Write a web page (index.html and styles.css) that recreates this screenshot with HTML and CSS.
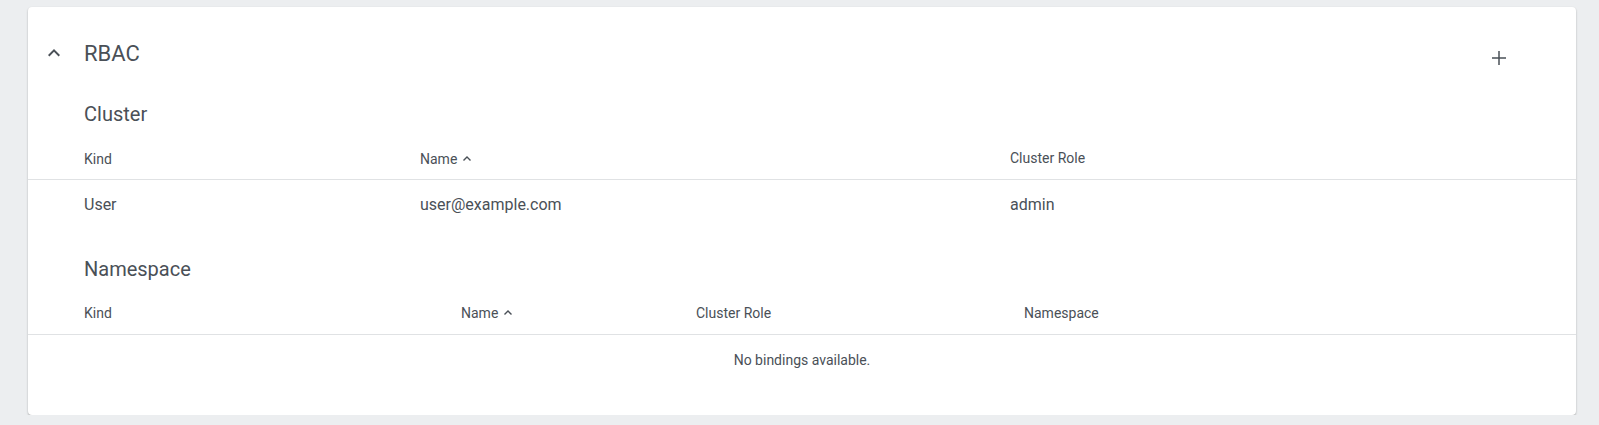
FILE: index.html
```html
<!DOCTYPE html>
<html lang="en">
<head>
<meta charset="utf-8">
<title>RBAC</title>
<link rel="stylesheet" href="styles.css">
</head>
<body>
<div class="card">
  <div class="card-header">
    <svg class="toggle" viewBox="0 0 24 24" width="24" height="24"><path d="M12 8l-6 6 1.41 1.41L12 10.83l4.59 4.58L18 14z"/></svg>
    <div class="card-title">RBAC</div>
    <svg class="add" viewBox="0 0 24 24" width="24" height="24"><path d="M19 12.75h-6.25V19h-1.5v-6.25H5v-1.5h6.25V5h1.5v6.25H19z"/></svg>
  </div>

  <div class="section-title">Cluster</div>
  <div class="row head cluster-cols">
    <div>Kind</div>
    <div class="sort">Name <svg viewBox="0 0 10 10" width="10" height="10"><polyline points="1.5,6.5 5,3 8.5,6.5"/></svg></div>
    <div class="up1">Cluster Role</div>
  </div>
  <div class="row data cluster-cols">
    <div>User</div>
    <div>user@example.com</div>
    <div>admin</div>
  </div>

  <div class="section-title ns">Namespace</div>
  <div class="row head ns-cols">
    <div>Kind</div>
    <div class="sort">Name <svg viewBox="0 0 10 10" width="10" height="10"><polyline points="1.5,6.5 5,3 8.5,6.5"/></svg></div>
    <div>Cluster Role</div>
    <div>Namespace</div>
  </div>
  <div class="empty">No bindings available.</div>
</div>
</body>
</html>
```

FILE: styles.css
```css
html, body {
  margin: 0;
  padding: 0;
}
body {
  background: #eceef0;
  font-family: Roboto, "Liberation Sans", Arial, sans-serif;
  color: #4a5057;
  padding: 7px 23px 0 28px;
}
.card {
  background: #fff;
  border-radius: 4px;
  box-shadow: 0 1px 2px rgba(0,0,0,0.3);
  height: 408px;
  box-sizing: border-box;
}
.card-header {
  height: 92px;
  display: flex;
  align-items: center;
  padding-left: 14px;
  padding-right: 65px;
}
.toggle {
  fill: #4a5057;
  flex: none;
}
.card-title {
  font-size: 22px;
  margin-left: 18px;
  flex: 1;
}
.add {
  fill: #4a5057;
  margin-top: 10px;
  flex: none;
}
.section-title {
  font-size: 20px;
  height: 30px;
  line-height: 30px;
  padding-left: 56px;
}
.section-title.ns {
  margin-top: 26px;
}
.row {
  display: grid;
  align-items: center;
  padding-left: 56px;
}
.row.head {
  height: 40px;
  padding-top: 10px;
  font-size: 14px;
  border-bottom: 1px solid #e0e2e4;
}
.row.data {
  height: 48px;
  font-size: 16px;
}
.cluster-cols {
  grid-template-columns: 336px 590px 1fr;
}
.ns-cols {
  grid-template-columns: 377px 235px 328px 1fr;
}
.ns-cols.head {
  padding-top: 8px;
  height: 42px;
}
.up1 {
  margin-top: -2px;
}
.sort {
  display: flex;
  align-items: center;
  gap: 5px;
}
.sort svg {
  fill: none;
  stroke: #4a5057;
  stroke-width: 1.4;
}
.empty {
  height: 50px;
  line-height: 50px;
  text-align: center;
  font-size: 14px;
}
```
